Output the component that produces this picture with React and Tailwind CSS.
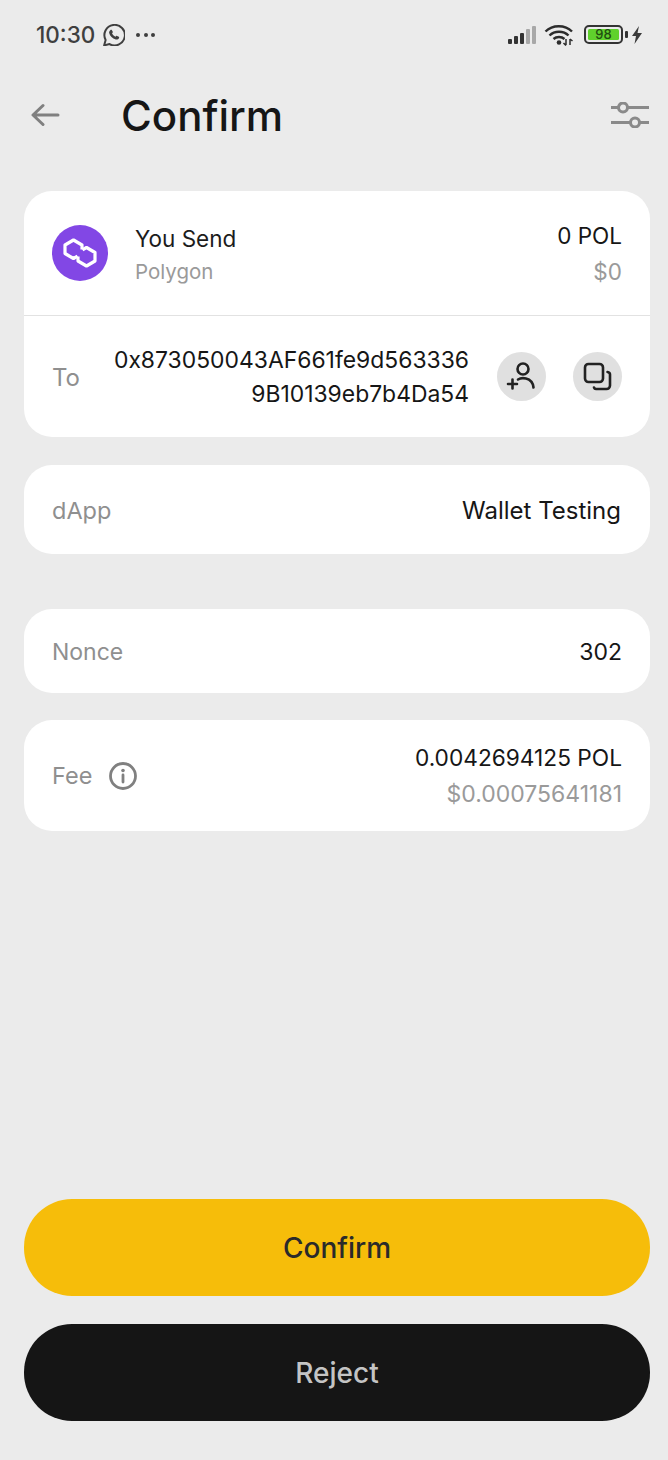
import React from "react";

function WhatsApp() {
  return (
    <svg width="22" height="22" viewBox="2 2 20 20" fill="none" className="ml-[8px]">
      <path d="M3 21.500l1.400-5A9.300 9.300 0 1 1 8 20.200z" stroke="#3f3f3f" strokeWidth="1.800" strokeLinejoin="round" />
      <path d="M8.800 7.400c.3-.3.9-.4 1.200 0l.9 1.700c.1.300 0 .6-.2.800l-.5.600c.5 1.300 1.700 2.500 3.100 3.100l.7-.7c.2-.2.500-.3.800-.1l1.600.9c.3.200.4.600.2 1-.6 1.200-1.800 1.600-3 1.300-3-.7-5.300-3-6-5.800-.2-1 .3-2.100 1.200-2.800z" fill="#3f3f3f" />
    </svg>
  );
}

function Signal() {
  const bars = [
    [5, "#333"], [8, "#333"], [11, "#333"], [15, "#a8a8a8"], [18, "#a8a8a8"],
  ];
  return (
    <div className="flex items-end gap-[2px] h-[18px]">
      {bars.map(([h, c], i) => (
        <div key={i} className="w-[4px] rounded-[1px]" style={{ height: h, background: c }} />
      ))}
    </div>
  );
}

function Wifi() {
  return (
    <svg width="30" height="22" viewBox="0 0 30 22" fill="none">
      <path d="M1.500 7.500C8.500 .5 21 .5 28 7.500" stroke="#2c2c2c" strokeWidth="2.400" />
      <path d="M5.500 11.500c5-5 14-5 19 0" stroke="#2c2c2c" strokeWidth="2.400" />
      <path d="M9.500 15c3-2.700 8-2.700 11 0" stroke="#2c2c2c" strokeWidth="2.400" />
      <circle cx="15" cy="18.500" r="2.300" fill="#2c2c2c" />
      <path d="M22 15v6M19.500 19l2.500 2.500M26 21v-6M28.500 17L26 15" stroke="#2c2c2c" strokeWidth="1.500" />
    </svg>
  );
}

function Battery() {
  return (
    <div className="flex items-center ml-[2px]">
      <div className="w-[39px] h-[19px] rounded-[5px] border-2 border-[#333333] p-[2px]">
        <div className="w-full h-full rounded-[1.500px] bg-[#5fd12c] flex items-center justify-center text-[13px] leading-none text-[#1f4d10] font-medium">
          98
        </div>
      </div>
      <div className="w-[3px] h-[7px] ml-[2px] rounded-[1px] bg-[#333333]" />
      <svg width="12" height="18" viewBox="0 0 12 18" className="ml-[3px]">
        <path d="M8 0L1 10h4l-1.500 8L11 7H6.500z" fill="#3a3a3a" />
      </svg>
    </div>
  );
}

function Sliders() {
  return (
    <svg width="38" height="26" viewBox="0 0 38 26" fill="none" stroke="#8a8a8a" strokeWidth="3">
      <path d="M0 5.500h7M17 5.500h21M0 20.500h19M29 20.500h9" />
      <circle cx="12" cy="5.500" r="4.500" />
      <circle cx="24" cy="20.500" r="4.500" />
    </svg>
  );
}

function PolygonLogo() {
  return (
    <div className="w-[56px] h-[56px] rounded-full bg-[#8247e5] flex items-center justify-center">
      <svg width="36" height="32" viewBox="0 0 36 32" fill="none" stroke="#ffffff" strokeWidth="3.200" strokeLinejoin="round">
        <path d="M20 12.500V8L11.500 3 3 8v8.500l8.500 5 4-2.300" />
        <path d="M16 19.500V24l8.500 5 8.500-5v-8.500l-8.500-5-4 2.300" />
      </svg>
    </div>
  );
}

function CircleBtn({ children }) {
  return (
    <div className="w-[49px] h-[49px] rounded-full bg-[#e0e0e0] flex items-center justify-center">
      {children}
    </div>
  );
}

export default function App() {
  return (
    <div
      className="w-[668px] h-[1460px] bg-[#ebebeb] flex flex-col text-[#161616]"
      style={{ fontFamily: "Inter, 'Noto Sans', sans-serif" }}
    >
      {/* status bar */}
      <div className="flex items-center justify-between h-[69px] pl-[36px] pr-[25px]">
        <div className="flex items-center text-[#3f3f3f]">
          <span className="text-[22.500px] leading-none font-medium pt-[2px]">10:30</span>
          <WhatsApp />
          <div className="flex gap-[3.500px] ml-[11px]">
            <div className="w-[4px] h-[4px] rounded-full bg-[#3f3f3f]" />
            <div className="w-[4px] h-[4px] rounded-full bg-[#3f3f3f]" />
            <div className="w-[4px] h-[4px] rounded-full bg-[#3f3f3f]" />
          </div>
        </div>
        <div className="flex items-center gap-[8px]">
          <Signal />
          <Wifi />
          <Battery />
        </div>
      </div>

      {/* header */}
      <div className="flex items-center justify-between h-[92px] pl-[31px] pr-[19px]">
        <div className="flex items-center">
          <svg width="29" height="24" viewBox="0 0 29 24" fill="none" stroke="#808080" strokeWidth="3" strokeLinecap="round" strokeLinejoin="round">
            <path d="M27 12H3M12 2.500L2 12l10 9.500" />
          </svg>
          <h1 className="ml-[61px] pt-[2px] text-[42px] leading-none font-medium text-[#161616]">Confirm</h1>
        </div>
        <Sliders />
      </div>

      <div className="flex flex-col flex-1 pl-[24px] pr-[18px] pt-[30px] pb-[39px]">
        {/* send card */}
        <div className="bg-white rounded-[28px] h-[246px] flex flex-col">
          <div className="flex items-center justify-between h-[125px] px-[28px] border-b border-[#e2e2e2]">
            <div className="flex items-center">
              <PolygonLogo />
              <div className="ml-[27px] flex flex-col gap-[7px] pt-[2px]">
                <span className="text-[22.500px] leading-[28px] text-[#1c1c1c]">You Send</span>
                <span className="text-[20.500px] leading-[24px] text-[#9a9a9a]">Polygon</span>
              </div>
            </div>
            <div className="flex flex-col items-end gap-[9px]">
              <span className="text-[22.500px] leading-[28px]">0 POL</span>
              <span className="text-[22.500px] leading-[26px] text-[#9a9a9a]">$0</span>
            </div>
          </div>
          <div className="flex-1 flex items-center px-[28px]">
            <span className="text-[24px] text-[#8f8f8f] pt-[2px]">To</span>
            <div className="flex-1 text-right text-[22.900px] leading-[34px] text-[#161616] mr-[28px] pt-[1px]">
              <div>0x873050043AF661fe9d563336</div>
              <div>9B10139eb7b4Da54</div>
            </div>
            <div className="flex items-center gap-[27px]">
              <CircleBtn>
                <svg width="32" height="32" viewBox="0 0 32 32" fill="none" stroke="#222" strokeWidth="2.600" strokeLinecap="round">
                  <circle cx="17" cy="8" r="5.500" />
                  <path d="M12 18.500c2-1.300 5-1.700 8-1 4 1 7 4 7.500 9" />
                  <path d="M2 23h9M6.500 18.500v9" />
                </svg>
              </CircleBtn>
              <CircleBtn>
                <svg width="30" height="30" viewBox="0 0 30 30" fill="none" stroke="#222" strokeWidth="2.600" strokeLinejoin="round" strokeLinecap="round">
                  <rect x="2" y="2" width="18" height="18" rx="3.500" />
                  <path d="M24.500 10c1.500.2 2.500 1 2.500 2.500v11c0 2-1.500 3.500-3.500 3.500H13c-1 0-1.700-.6-2-1.500" />
                </svg>
              </CircleBtn>
            </div>
          </div>
        </div>

        {/* dApp */}
        <div className="mt-[28px] bg-white rounded-[28px] h-[89px] flex items-center justify-between pl-[28px] pr-[29px] pt-[2px]">
          <span className="text-[23.500px] text-[#8f8f8f]">dApp</span>
          <span className="text-[24px] text-[#161616]">Wallet Testing</span>
        </div>

        {/* Nonce */}
        <div className="mt-[55px] bg-white rounded-[28px] h-[84px] flex items-center justify-between px-[28px] pt-[2px]">
          <span className="text-[23px] text-[#8f8f8f]">Nonce</span>
          <span className="text-[23px] text-[#161616]">302</span>
        </div>

        {/* Fee */}
        <div className="mt-[27px] bg-white rounded-[28px] h-[111px] flex items-center justify-between px-[28px]">
          <div className="flex items-center">
            <span className="text-[23.500px] text-[#8f8f8f]">Fee</span>
            <svg width="30" height="30" viewBox="0 0 30 30" fill="none" className="ml-[16px]">
              <circle cx="15" cy="15" r="12.500" stroke="#808080" strokeWidth="2.800" />
              <circle cx="15" cy="9.500" r="1.800" fill="#808080" />
              <path d="M15 14v7" stroke="#808080" strokeWidth="2.800" strokeLinecap="round" />
            </svg>
          </div>
          <div className="flex flex-col items-end gap-[8px] pt-[1px]">
            <span className="text-[22.700px] leading-[28px]">0.0042694125 POL</span>
            <span className="text-[23px] leading-[28px] text-[#9a9a9a]">$0.00075641181</span>
          </div>
        </div>

        <div className="flex-1" />

        <button className="h-[97px] rounded-[48px] bg-[#f6bd0a] text-[28px] font-medium text-[#2a2a2a] pt-[1px]">
          Confirm
        </button>
        <button className="mt-[28px] h-[97px] rounded-[48px] bg-[#151515] text-[28px] font-medium text-[#c4c4c4] pt-[1px]">
          Reject
        </button>
      </div>
    </div>
  );
}
